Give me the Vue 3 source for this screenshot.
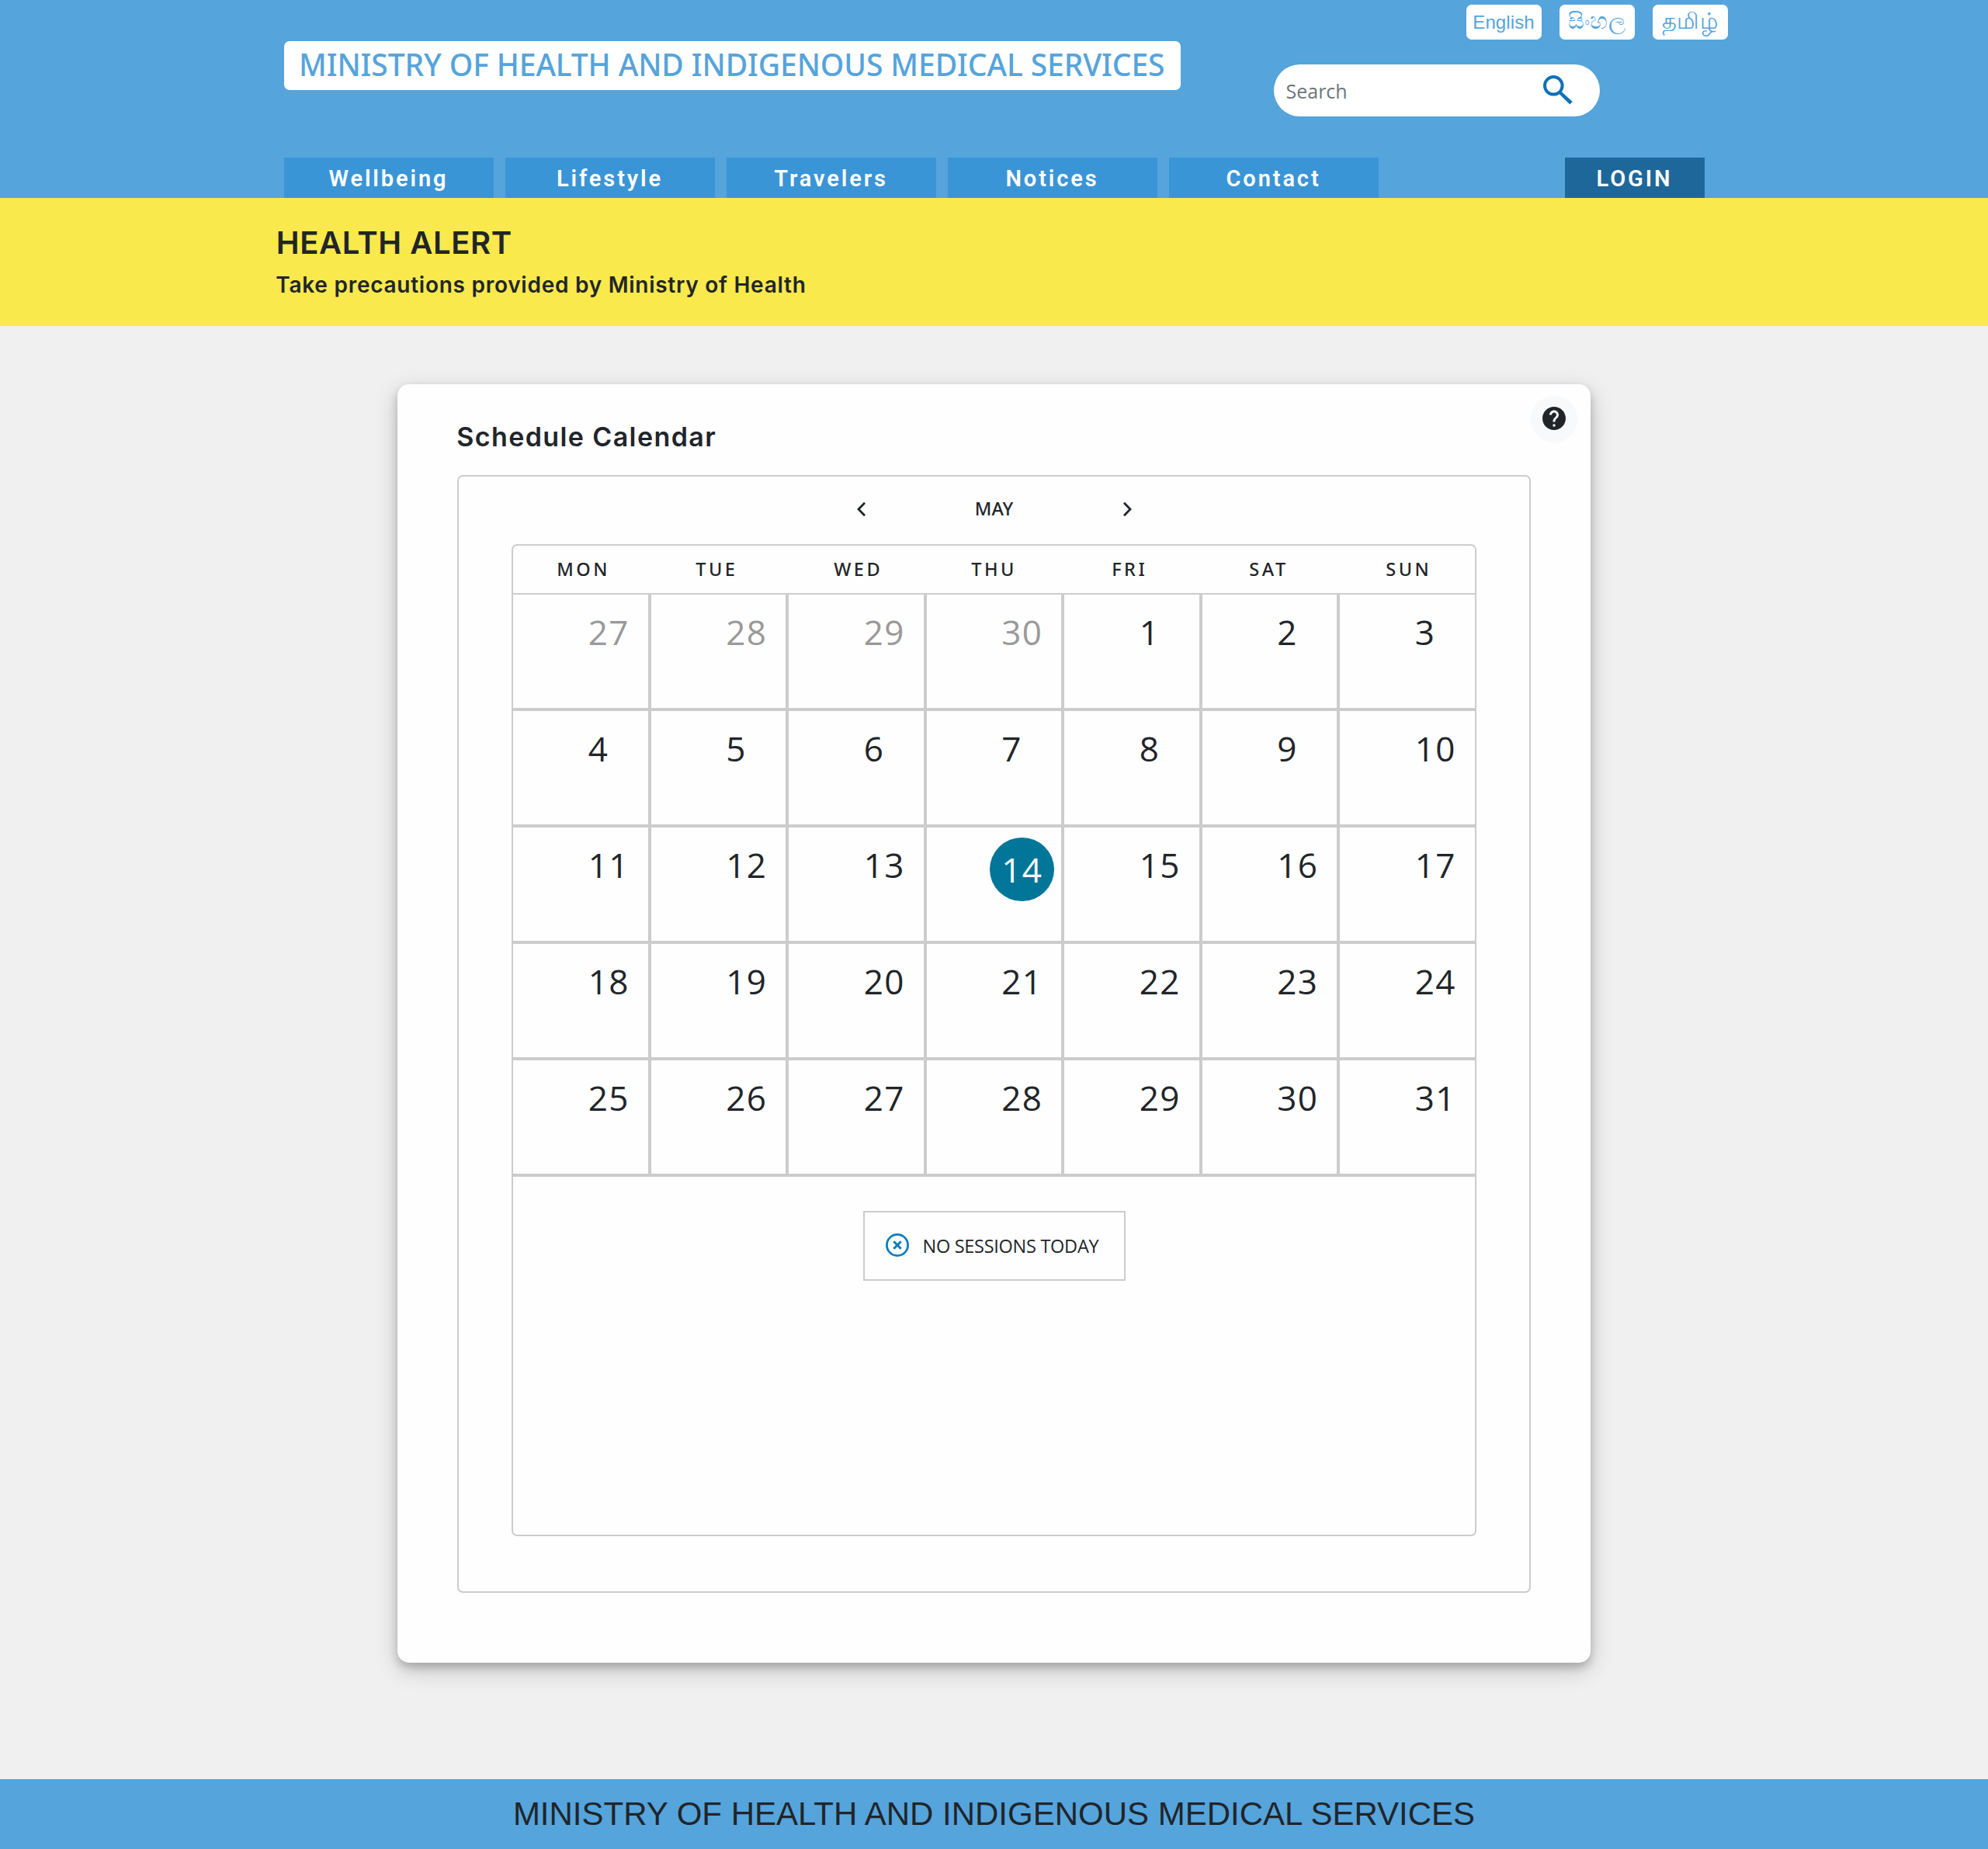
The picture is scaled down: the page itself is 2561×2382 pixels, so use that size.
<script setup>
const tabs = ['Wellbeing', 'Lifestyle', 'Travelers', 'Notices', 'Contact']
const languages = [
  { label: 'English', native: false },
  { label: 'සිංහල', native: true },
  { label: 'தமிழ்', native: true }
]
const weekdays = ['MON', 'TUE', 'WED', 'THU', 'FRI', 'SAT', 'SUN']
const today = 14

// Four trailing days of April followed by the 31 days of May
const days = [
  ...[27, 28, 29, 30].map((n) => ({ n, muted: true })),
  ...Array.from({ length: 31 }, (_, i) => ({ n: i + 1, muted: false }))
]
</script>

<template>
  <div class="page">
    <header class="header">
      <div class="top">
        <h1 class="brand">MINISTRY OF HEALTH AND INDIGENOUS MEDICAL SERVICES</h1>
        <div class="tools">
          <div class="languages">
            <button v-for="l in languages" :key="l.label" class="language" :class="{ native: l.native }">{{ l.label }}</button>
          </div>
          <div class="search">
            <span class="placeholder">Search</span>
            <svg class="search-icon" viewBox="0 0 40 40">
              <circle cx="15.3" cy="15.3" r="11.3" fill="none" stroke="#0d72b5" stroke-width="4" />
              <path d="M23 24.500l2.500-1.500L39.700 36l-3.400 3.600L23 26.500z" fill="#0d72b5" />
            </svg>
          </div>
        </div>
      </div>
      <nav class="nav">
        <a v-for="t in tabs" :key="t" class="tab">{{ t }}</a>
        <a class="tab login">LOGIN</a>
      </nav>
    </header>

    <section class="alert">
      <h2>HEALTH ALERT</h2>
      <p>Take precautions provided by Ministry of Health</p>
    </section>

    <main class="main">
      <div class="card">
        <button class="help">
          <svg viewBox="0 0 24 24">
            <path fill="#212529" d="M12 2C6.480 2 2 6.480 2 12s4.480 10 10 10 10-4.480 10-10S17.520 2 12 2zm1 17h-2v-2h2v2zm2.070-7.750l-.9.920C13.450 12.900 13 13.500 13 15h-2v-.5c0-1.100.45-2.100 1.170-2.830l1.240-1.260c.37-.36.59-.86.59-1.410 0-1.100-.9-2-2-2s-2 .9-2 2H8c0-2.210 1.790-4 4-4s4 1.790 4 4c0 .88-.36 1.680-.93 2.250z" />
          </svg>
        </button>
        <h3 class="title">Schedule Calendar</h3>
        <div class="frame">
          <div class="month">
            <svg class="arrow" viewBox="0 0 24 24"><path d="M17 3.800L9 12l8 8.200" /></svg>
            <span>MAY</span>
            <svg class="arrow" viewBox="0 0 24 24"><path d="M8 3.800L16 12l-8 8.200" /></svg>
          </div>
          <div class="calendar">
            <div class="weekdays">
              <span v-for="d in weekdays" :key="d">{{ d }}</span>
            </div>
            <div class="grid">
              <div v-for="(d, i) in days" :key="i" class="cell" :class="{ muted: d.muted }">
                <span :class="{ today: !d.muted && d.n === today }" class="num">{{ d.n }}</span>
              </div>
            </div>
            <div class="sessions">
              <div class="empty">
                <svg viewBox="0 0 30 30">
                  <g fill="none" stroke="#0a7ebd">
                    <circle cx="15" cy="15" r="13.600" stroke-width="2.800" />
                    <path d="M10.300 10.300l9.400 9.400M19.700 10.300l-9.400 9.400" stroke-width="3" />
                  </g>
                </svg>
                <span>NO SESSIONS TODAY</span>
              </div>
            </div>
          </div>
        </div>
      </div>
    </main>

    <footer class="footer">MINISTRY OF HEALTH AND INDIGENOUS MEDICAL SERVICES</footer>
  </div>
</template>

<style>
body {
  margin: 0;
  background: #f0f0f0;
}
</style>

<style scoped>
* {
  box-sizing: border-box;
}
h1, h2, h3, p {
  margin: 0;
}
button {
  border: 0;
  padding: 0;
}
.page {
  display: flex;
  flex-direction: column;
  height: 2382px;
  overflow: hidden;
  color: #212529;
  font-family: "Open Sans", "Noto Sans", sans-serif;
}
.header {
  display: flex;
  flex-direction: column;
  justify-content: space-between;
  height: 255px;
  padding-left: 365.5px;
  background: #55a4dc;
}
.top {
  display: flex;
  align-items: flex-start;
  gap: 120px;
}
.brand {
  width: 1155px;
  height: 63px;
  margin-top: 53px;
  padding-left: 19.5px;
  border-radius: 7px;
  background: #fff;
  color: #55a4dc;
  font: 500 39px/60px "Noto Sans", sans-serif;
  letter-spacing: -0.1px;
  white-space: nowrap;
}
.tools {
  display: flex;
  flex-direction: column;
  align-items: flex-start;
  gap: 32px;
  padding-top: 6px;
}
.languages {
  display: flex;
  gap: 23px;
  padding-left: 248px;
}
.language {
  width: 97px;
  height: 45px;
  border-radius: 7px;
  background: #fff;
  color: #55a4dc;
  font: 24px/45px "Liberation Sans", sans-serif;
  letter-spacing: 0.1px;
}
.language.native {
  font-size: 28.5px;
  line-height: 43px;
  padding-bottom: 2px;
}
.search {
  display: flex;
  align-items: center;
  justify-content: space-between;
  width: 420px;
  height: 67px;
  padding: 0 34.5px 0 16px;
  border-radius: 33.5px;
  background: #fff;
}
.placeholder {
  color: #6c757d;
  font-size: 25px;
}
.search-icon {
  width: 40px;
  height: 40px;
  margin-bottom: 3px;
}
.nav {
  display: flex;
  gap: 15px;
}
.tab {
  width: 270px;
  height: 52px;
  background: #3a95d6;
  color: #fff;
  text-align: center;
  font: 600 29px/54px Roboto, sans-serif;
  letter-spacing: 2.9px;
}
.login {
  width: 180px;
  margin-left: 225px;
  background: #1e679b;
}
.alert {
  height: 165px;
  padding: 33px 0 0 355.3px;
  background: #f9e94c;
  font-family: Inter, sans-serif;
}
.alert h2 {
  padding-left: 0.5px;
  font-size: 40px;
  font-weight: 600;
  line-height: 49px;
  letter-spacing: 0.6px;
}
.alert p {
  margin-top: 12px;
  font-size: 28px;
  font-weight: 600;
  line-height: 37px;
  letter-spacing: 0.74px;
}
.main {
  flex: 1;
  display: flex;
  justify-content: center;
  align-items: flex-start;
  padding-top: 75px;
}
.card {
  position: relative;
  width: 60%;
  height: 1647px;
  padding: 48px 77px 0;
  border-radius: 15px;
  background: #fefefe;
  box-shadow: 0 6px 12px rgba(0, 0, 0, 0.2), 0 9px 30px rgba(0, 0, 0, 0.19);
}
.help {
  position: absolute;
  top: 15px;
  right: 17px;
  display: flex;
  align-items: center;
  justify-content: center;
  width: 60px;
  height: 60px;
  padding-bottom: 2px;
  border-radius: 50%;
  background: #f8f9fb;
}
.help svg {
  width: 36px;
  height: 36px;
}
.title {
  margin: 0 0 30px -1px;
  font: 600 34px/39px Inter, sans-serif;
  letter-spacing: 1.4px;
}
.frame {
  height: 1440px;
  padding: 0 68px;
  border: 2px solid #ccc;
  border-radius: 7px;
}
.month {
  display: grid;
  grid-template-columns: repeat(3, 171.3px);
  place-content: center;
  place-items: center;
  height: 82px;
  margin-bottom: 5px;
  font: 500 23.5px/82px "Noto Sans", sans-serif;
}
.arrow {
  width: 24px;
  height: 24px;
  margin-top: 2px;
  fill: none;
  stroke: #212529;
  stroke-width: 2.8;
}
.weekdays {
  display: grid;
  grid-template-columns: 179px 178px 177px 181px 177px 176px auto;
  height: 63px;
  padding-left: 56px;
  border: 2px solid #ccc;
  border-bottom: 0;
  border-radius: 7px 7px 0 0;
  font: 500 23.5px/60px "Noto Sans", sans-serif;
  letter-spacing: 3.5px;
}
.grid {
  display: grid;
  grid-template-columns: repeat(7, 1fr);
  grid-auto-rows: 150px;
}
.cell {
  padding: 18px 0 0 96.5px;
  border: 2px solid #ccc;
}
.num {
  display: block;
  font-size: 44px;
  line-height: 60px;
  letter-spacing: 1.4px;
}
.muted {
  color: #999;
}
.today {
  width: 83.5px;
  height: 82px;
  margin: -5px 0 0 -15.5px;
  padding-left: 15.5px;
  border-radius: 50%;
  background: #017699;
  color: #fff;
  line-height: 82px;
}
.sessions {
  display: flex;
  justify-content: center;
  align-items: flex-start;
  height: 465px;
  padding-top: 44px;
  border: 2px solid #ccc;
  border-radius: 0 0 7px 7px;
}
.empty {
  display: flex;
  align-items: center;
  gap: 18px;
  width: 338px;
  height: 90px;
  padding-left: 27px;
  border: 2px solid #ccc;
  font-size: 23.5px;
  letter-spacing: -0.28px;
  white-space: nowrap;
}
.empty svg {
  width: 30px;
  height: 30px;
  margin-bottom: 2px;
}
.footer {
  height: 90px;
  background: #55a4dc;
  text-align: center;
  font: 42px/89px "Liberation Sans", sans-serif;
}
</style>
